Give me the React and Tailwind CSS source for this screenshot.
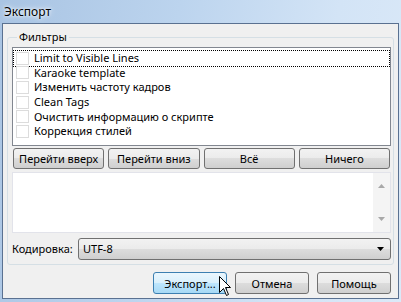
import React from "react";

const font = { fontFamily: '"Noto Sans", "Liberation Sans", sans-serif' };

function Btn({ children, className = "", hot = false }) {
  return (
    <div
      className={
        "flex items-center justify-center rounded-[3px] border text-[11px] text-black leading-none " +
        (hot
          ? "border-[#3c7fb1] bg-[linear-gradient(#eaf6fd_0%,#d9f0fc_50%,#bee6fd_50%,#a7d9f5_100%)] "
          : "border-[#707070] bg-[linear-gradient(#f2f2f2_0%,#ebebeb_50%,#dddddd_50%,#cfcfcf_100%)] ") +
        className
      }
    >
      <span>{children}</span>
    </div>
  );
}

function Check() {
  return (
    <div className="w-[13px] h-[13px] border border-[#dcdcdc] bg-white shrink-0" />
  );
}

const items = [
  "Limit to Visible Lines",
  "Karaoke template",
  "Изменить частоту кадров",
  "Clean Tags",
  "Очистить информацию о скрипте",
  "Коррекция стилей",
];

export default function App() {
  return (
    <div
      style={font}
      className="relative w-[401px] h-[302px] overflow-hidden bg-[linear-gradient(100deg,#a9c4e3_0%,#bcd4ee_40%,#d3e4f6_75%,#dbe9f8_100%)] text-[11px] text-black"
    >
      <div className="h-[23px] pl-[4px] flex items-center">
        <span className="text-[12px] text-black [text-shadow:0_0_6px_#ffffff,0_0_3px_#ffffff]">
          Экспорт
        </span>
      </div>
      <div className="mx-[2px] h-[276px] border border-[#5a7191] bg-[#f0f0f0] flex flex-col px-[4px] pb-[3px]">
        <fieldset className="mt-[6px] border border-[#d5dfe5] rounded-[3px] pl-[4px] pr-[2px] pb-[4px] flex flex-col">
          <legend className="ml-[5px] px-[2px] leading-[14px] text-[11px]">Фильтры</legend>
          <div className="mt-[3px] h-[99px] border border-[#828790] bg-white pt-[3px] px-[1px] flex flex-col">
            {items.map((t, i) => (
              <div
                key={t}
                className={
                  "h-[14.6px] shrink-0 flex items-center gap-[5px] pl-[2px] " +
                  (i === 0 ? "outline outline-1 outline-dotted outline-black" : "")
                }
              >
                <Check />
                <span className="leading-[12px] whitespace-nowrap">{t}</span>
              </div>
            ))}
          </div>
          <div className="mt-[2px] grid grid-cols-4 gap-[4px] h-[21px] pl-[1px] pr-[1px]">
            <Btn>Перейти вверх</Btn>
            <Btn>Перейти вниз</Btn>
            <Btn>Всё</Btn>
            <Btn>Ничего</Btn>
          </div>
          <div className="mt-[3px] h-[61px] border border-[#e2e3ea] bg-white flex justify-end">
            <div className="w-[17px] h-full bg-[#f4f4f4] flex flex-col items-center justify-between py-[11px]">
              <svg width="7" height="4" viewBox="0 0 7 4">
                <path d="M0 4 L3.5 0 L7 4 Z" fill="#a8a8a8" />
              </svg>
              <svg width="7" height="4" viewBox="0 0 7 4">
                <path d="M0 0 L3.5 4 L7 0 Z" fill="#a8a8a8" />
              </svg>
            </div>
          </div>
          <div className="mt-[5px] flex items-center h-[22px]">
            <span className="w-[66px]">Кодировка:</span>
            <div className="flex-1 h-full rounded-[3px] border border-[#707070] bg-[linear-gradient(#f2f2f2_0%,#ebebeb_50%,#dddddd_50%,#cfcfcf_100%)] flex items-center pl-[4px] pr-[6px]">
              <span className="flex-1">UTF-8</span>
              <svg width="7" height="4" viewBox="0 0 7 4">
                <path d="M0 0 L3.5 4 L7 0 Z" fill="#000" />
              </svg>
            </div>
          </div>
        </fieldset>
        <div className="mt-[7px] flex justify-end gap-[8px] pr-[3px]">
          <Btn hot className="w-[74px] h-[22px]">Экспорт...</Btn>
          <Btn className="w-[74px] h-[22px]">Отмена</Btn>
          <Btn className="w-[74px] h-[22px]">Помощь</Btn>
        </div>
      </div>
      <svg
        className="absolute left-[219px] top-[276px]"
        width="13"
        height="21"
        viewBox="0 0 13 21"
      >
        <path
          d="M0.5 0.5 L0.5 16.5 L4.5 12.5 L7.5 19.5 L9.5 18.5 L6.5 11.5 L11.5 11.5 Z"
          fill="#fff"
          stroke="#000"
          strokeWidth="1"
          strokeLinejoin="miter"
        />
      </svg>
    </div>
  );
}
